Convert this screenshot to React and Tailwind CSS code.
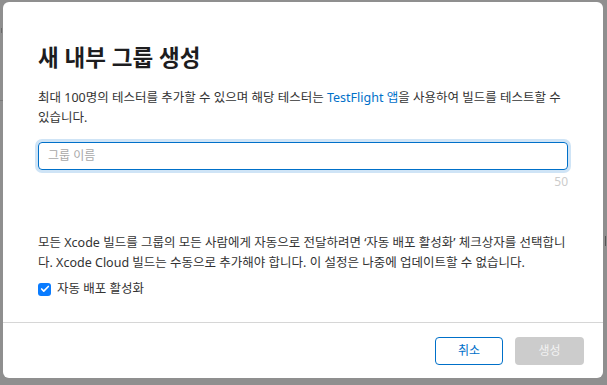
import { Check } from "lucide-react";

const font = { fontFamily: '"Noto Sans", "Noto Sans CJK KR", sans-serif' };

function Checkbox() {
  return (
    <span className="flex h-[13px] w-[13px] items-center justify-center rounded-[3px] bg-[#0a7cff]">
      <Check size={10} strokeWidth={4} className="text-white" />
    </span>
  );
}

export default function App() {
  return (
    <div
      className="relative h-[385px] w-[607px] overflow-hidden bg-[#8f8f8f] pl-[3px] pt-[2px]"
      style={font}
    >
      {/* faint page bits behind the overlay */}
      <div className="absolute left-0 top-[100px] h-px w-[3px] bg-[#7a7a7a]" />
      <div className="absolute left-[1px] top-[28px] h-[5px] w-px bg-[#6a6a6a]" />
      <div className="absolute right-[1px] top-[236px] h-[10px] w-px bg-[#555]" />

      <div className="flex h-[376px] w-[600px] flex-col rounded-[6px] bg-white">
        <section className="flex-1 px-[35px] pt-[41px]">
          <h1 className="text-[22.5px] font-bold leading-[30px] text-[#1d1d1f]">
            새 내부 그룹 생성
          </h1>
          <p className="mt-[15px] text-[12.5px] leading-[20px] text-[#333]">
            최대 100명의 테스터를 추가할 수 있으며 해당 테스터는{" "}
            <span className="text-[#0070c9]">TestFlight 앱</span>을 사용하여 빌드를
            테스트할 수 있습니다.
          </p>

          <div className="mt-[14px] flex h-[28px] items-center rounded-[4px] border border-[#0070c9] px-[9px] shadow-[0_0_0_3px_#cfe4f6]">
            <span className="text-[12px] text-[#a8a8a8]">그룹 이름</span>
          </div>
          <div className="mt-[5px] text-right text-[12px] leading-[14px] text-[#cccccc]">
            50
          </div>

          <p className="mt-[44px] text-[12.5px] leading-[20px] text-[#333]">
            모든 Xcode 빌드를 그룹의 모든 사람에게 자동으로 전달하려면 ‘자동 배포
            활성화’ 체크상자를 선택합니다. Xcode Cloud 빌드는 수동으로 추가해야
            합니다. 이 설정은 나중에 업데이트할 수 없습니다.
          </p>

          <label className="mt-[6px] flex h-[20px] items-center gap-[6px]">
            <Checkbox />
            <span className="text-[12.5px] text-[#333]">자동 배포 활성화</span>
          </label>
        </section>

        <footer className="flex h-[56px] items-center justify-end gap-[12px] border-t border-[#d6d6d6] pr-[19px]">
          <button
            type="button"
            className="h-[28px] w-[68px] rounded-[4px] border border-[#0070c9] text-[12px] text-[#0070c9]"
          >
            취소
          </button>
          <button
            type="button"
            disabled
            className="h-[28px] w-[69px] rounded-[4px] bg-[#cccccc] text-[12px] text-[#f2f2f2]"
          >
            생성
          </button>
        </footer>
      </div>
    </div>
  );
}
